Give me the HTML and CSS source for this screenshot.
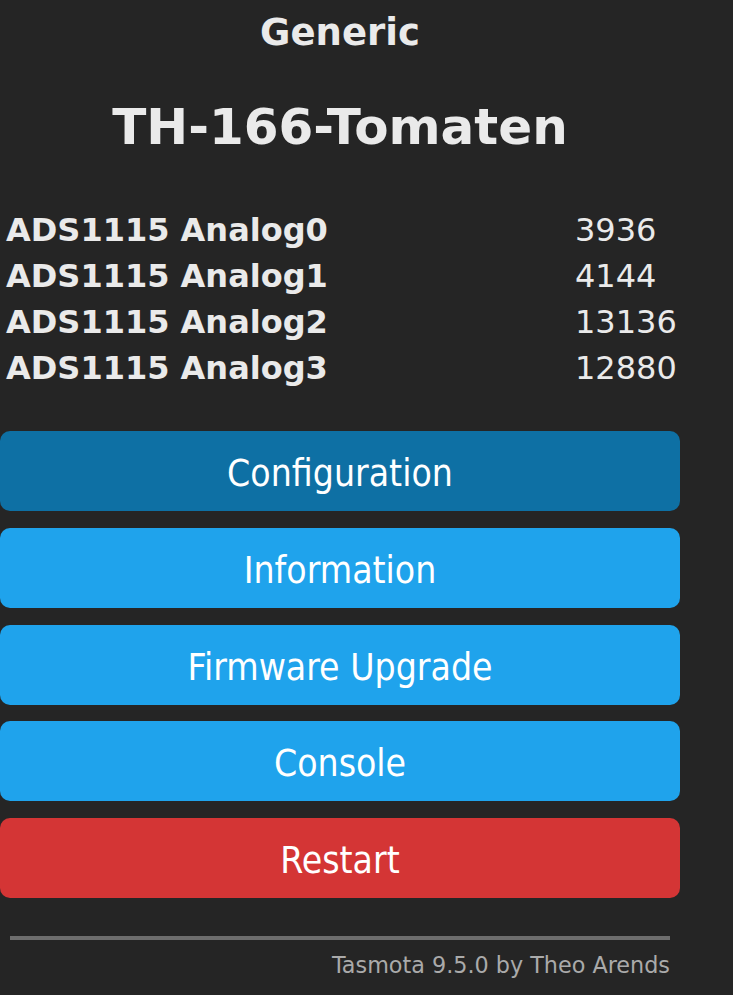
FILE: index.html
```html
<!DOCTYPE html>
<html lang="en">
<head>
  <meta charset="UTF-8">
  <title>TH-166-Tomaten - Main Menu</title>
  <meta name="viewport" content="width=device-width, initial-scale=1.0">
  <link rel="stylesheet" href="styles.css">
</head>
<body>

  <div class="page">
    <h3>Generic</h3>
    <h2>TH-166-Tomaten</h2>

    <table class="sensors">
      <tr><th>ADS1115 Analog0</th><td>3936</td></tr>
      <tr><th>ADS1115 Analog1</th><td>4144</td></tr>
      <tr><th>ADS1115 Analog2</th><td>13136</td></tr>
      <tr><th>ADS1115 Analog3</th><td>12880</td></tr>
    </table>

    <div class="menu">
      <button class="btn active">Configuration</button>
      <button class="btn">Information</button>
      <button class="btn">Firmware Upgrade</button>
      <button class="btn">Console</button>
      <button class="btn red">Restart</button>
    </div>

    <hr>
    <div class="footer">Tasmota 9.5.0 by Theo Arends</div>
  </div>

</body>
</html>
```

FILE: styles.css
```css
body {
  margin: 0;
  background: #252525;
  color: #eaeaea;
  font-family: "DejaVu Sans", Verdana, sans-serif;
}
.page {
  width: 680px;
  padding-top: 11px;
}
h3 {
  margin: 0;
  text-align: center;
  font-size: 37px;
  line-height: 44px;
}
h2 {
  margin: 44px 0 0;
  text-align: center;
  font-size: 50px;
  line-height: 56px;
}
.sensors {
  margin-top: 52px;
  width: 100%;
  border-collapse: collapse;
  font-size: 32px;
  line-height: 46px;
}
.sensors th {
  width: 569px;
  padding: 0 0 0 6px;
  text-align: left;
}
.sensors td {
  padding: 0;
}
.menu {
  margin-top: 40px;
}
.btn {
  display: block;
  width: 100%;
  height: 80px;
  margin: 0 0 16.75px;
  padding: 6px 0 0;
  border: 0;
  border-radius: 10px;
  background: #1fa3ec;
  color: #fff;
  font-family: "DejaVu Sans Condensed", "DejaVu Sans", sans-serif;
  font-stretch: condensed;
  font-size: 37px;
  line-height: 74px;
}
.btn.active {
  background: #0e70a4;
}
.btn.red {
  background: #d43535;
  margin-bottom: 0;
}
hr {
  margin: 38px 10px 0;
  height: 0;
  border: 0;
  border-top: 4px solid #6d6d6d;
}
.footer {
  margin-top: 12px;
  padding-right: 10px;
  text-align: right;
  color: #aaa;
  font-size: 22.3px;
  line-height: 26px;
}
```
